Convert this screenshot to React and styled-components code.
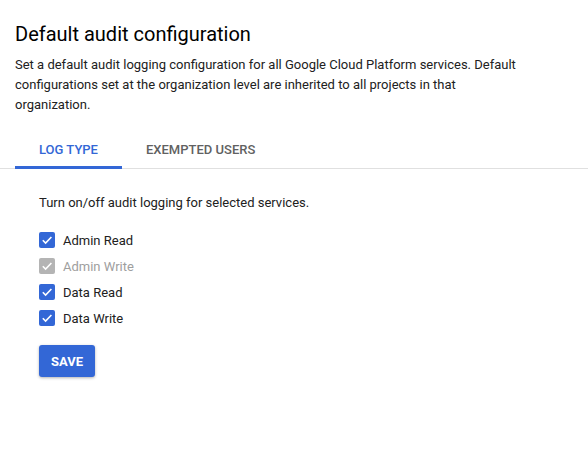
import styled, { createGlobalStyle } from 'styled-components';

const GlobalStyle = createGlobalStyle`
  body {
    margin: 0;
    background: #fff;
    font-family: Roboto, "Liberation Sans", Arial, sans-serif;
    color: #212121;
  }
`;

const tabs = ['Log type', 'Exempted users'];

const logTypes = [
  { name: 'Admin Read', checked: true },
  { name: 'Admin Write', checked: true, disabled: true },
  { name: 'Data Read', checked: true },
  { name: 'Data Write', checked: true },
];

const App = () => {
  return (
    <Page>
      <GlobalStyle />
      <Header>
        <Title>Default audit configuration</Title>
        <Description>
          Set a default audit logging configuration for all Google Cloud
          Platform services. Default configurations set at the organization
          level are inherited to all projects in that organization.
        </Description>
      </Header>
      <TabBar>
        {tabs.map((tab, idx) => (
          <Tab key={tab} active={idx === 0}>
            {tab}
          </Tab>
        ))}
      </TabBar>
      <Panel>
        <Hint>Turn on/off audit logging for selected services.</Hint>
        <CheckList>
          {logTypes.map((item) => (
            <CheckRow key={item.name} disabled={item.disabled}>
              <Box disabled={item.disabled}>
                {item.checked && (
                  <svg width="12" height="12" viewBox="0 0 12 12">
                    <path
                      d="M1.8 6.2 L4.6 9 L10.4 3"
                      fill="none"
                      stroke="#fff"
                      strokeWidth="1.6"
                    />
                  </svg>
                )}
              </Box>
              {item.name}
            </CheckRow>
          ))}
        </CheckList>
        <SaveButton>Save</SaveButton>
      </Panel>
    </Page>
  );
};

export default App;

const Page = styled.div`
  width: 588px;
  height: 458px;
  overflow: hidden;
`;

const Header = styled.div`
  padding: 22px 15px 0;
`;

const Title = styled.h1`
  margin: 0;
  font-size: 20px;
  font-weight: 400;
  line-height: 24px;
  color: #000;
`;

const Description = styled.p`
  margin: 9px 0 0;
  font-size: 13px;
  line-height: 20px;
  color: #212121;
  max-width: 508px;
`;

const TabBar = styled.div`
  display: flex;
  margin-top: 12px;
  padding-left: 15px;
  border-bottom: 1px solid #e0e0e0;
`;

const Tab = styled.div`
  display: flex;
  align-items: center;
  justify-content: center;
  box-sizing: border-box;
  height: 42px;
  padding: 5px 24px 0;
  margin-bottom: -1px;
  font-size: 13px;
  font-weight: 500;
  text-transform: uppercase;
  color: ${(p) => (p.active ? '#3367d6' : '#616161')};
  border-bottom: 3px solid ${(p) => (p.active ? '#3367d6' : 'transparent')};
`;

const Panel = styled.div`
  padding: 24px 39px 0;
`;

const Hint = styled.div`
  font-size: 13px;
  line-height: 20px;
`;

const CheckList = styled.div`
  display: flex;
  flex-direction: column;
  margin-top: 14px;
`;

const CheckRow = styled.label`
  display: flex;
  align-items: center;
  gap: 8px;
  height: 26px;
  font-size: 13px;
  color: ${(p) => (p.disabled ? '#9e9e9e' : '#212121')};
`;

const Box = styled.span`
  display: inline-flex;
  align-items: center;
  justify-content: center;
  width: 16px;
  height: 16px;
  border-radius: 2px;
  background: ${(p) => (p.disabled ? '#b4b4b4' : '#3367d6')};
`;

const SaveButton = styled.button`
  margin-top: 14px;
  width: 56px;
  height: 32px;
  border: none;
  border-radius: 3px;
  background: #3367d6;
  color: #fff;
  font-family: inherit;
  font-size: 13px;
  font-weight: 700;
  text-transform: uppercase;
  box-shadow: 0 1px 3px rgba(0, 0, 0, 0.3);
`;
